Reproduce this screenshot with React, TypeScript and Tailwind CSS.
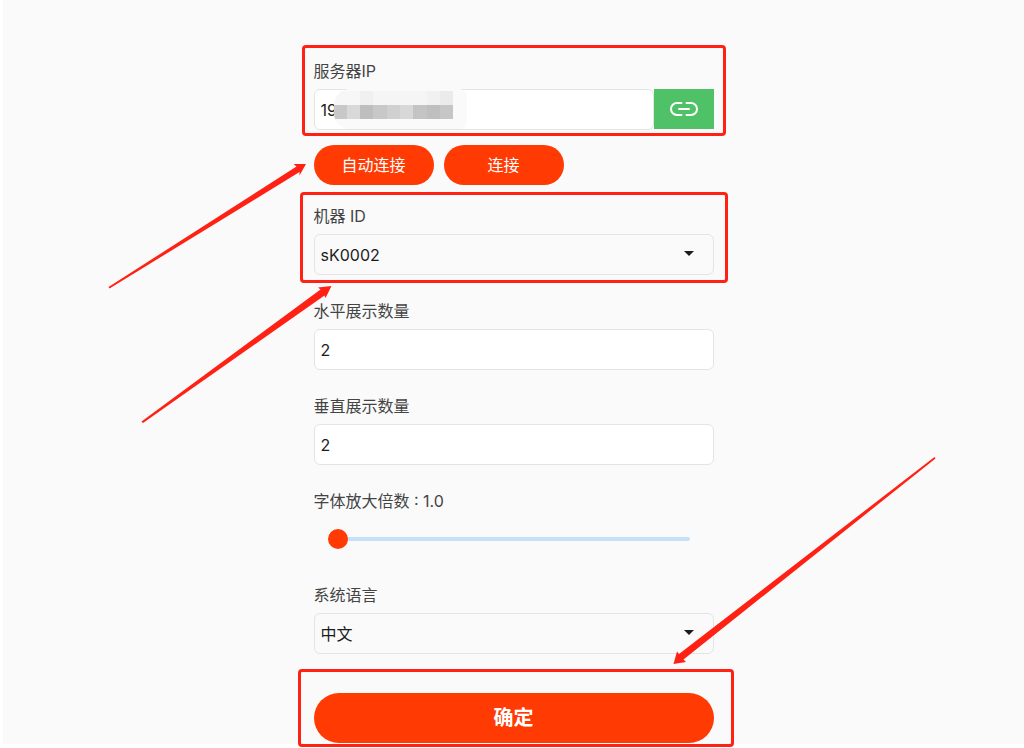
import type { ReactNode } from "react";

const BLURRED_CELLS = [
  ["#f7f7f7", "#f7f7f7", "#f0f0f0", "#f5f5f5", "#f5f5f5", "#f5f5f5", "#f5f5f5", "#f1f1f1", "#ebebeb"],
  ["#c8c8c8", "#d9d9d9", "#bebebe", "#c8c8c8", "#d0d0d0", "#d8d8d8", "#c4c4c4", "#bfbfbf", "#c6c6c6"],
];

const FIELD =
  "h-[41px] w-full rounded-md border border-[#e4e4e4] px-1.5 text-base text-[#1c1c1c] outline-none";

function Field({ id, label, children }: { id: string; label: string; children: ReactNode }) {
  return (
    <div className="relative flex flex-col gap-1.5">
      <label htmlFor={id} className="text-base leading-6 text-[#444444]">
        {label}
      </label>
      {children}
    </div>
  );
}

function Dropdown({ id, value }: { id: string; value: string }) {
  return (
    <div className="relative">
      <select id={id} defaultValue={value} className={`${FIELD} appearance-none bg-[#fafafa]`}>
        <option value={value}>{value}</option>
      </select>
      <svg
        viewBox="0 0 10 5"
        className="pointer-events-none absolute top-[17px] right-5 h-[5px] w-[10px]"
        aria-hidden="true"
      >
        <path d="M0 0H10L5 5Z" fill="#1c1c1c" />
      </svg>
    </div>
  );
}

function Mosaic() {
  return (
    <div className="absolute top-0 left-5 h-10 w-[133px] overflow-hidden rounded-l-2xl rounded-r-lg bg-[#fafafa]">
      <div className="mt-0.5 grid w-[120px] grid-cols-9">
        {BLURRED_CELLS.flat().map((color, i) => (
          <span key={i} className="h-[14px]" style={{ backgroundColor: color }} />
        ))}
      </div>
    </div>
  );
}

function Arrows() {
  return (
    <svg
      width="400"
      height="748"
      viewBox="314 0 400 748"
      className="pointer-events-none absolute top-0 left-0 overflow-visible"
      fill="#ff2114"
      aria-hidden="true"
    >
      <path d="M108.500 287L296.500 166.500L293.500 164L306 164L299.500 175.500L299.500 172L109.500 288.500Z" />
      <path d="M141.500 421.500L320.500 289.500L318 287.500L331.500 286L325.500 298L324.500 295.500L143 423Z" />
      <path d="M934.500 457L679 654L677 651.500L673.500 664L686 662L683.500 659.500L935.500 458.500Z" />
    </svg>
  );
}

export default function App() {
  return (
    <div className="min-h-screen bg-white pb-1 pl-[3px] font-['Inter','Noto_Sans_CJK_SC',sans-serif]">
      <main className="flex min-h-[calc(100vh-4px)] justify-center bg-[#fafafa]">
        <form className="relative w-full max-w-[400px] pt-[59px]" onSubmit={(e) => e.preventDefault()}>
          <div className="relative">
            <Field id="server" label="服务器IP">
              <div className="flex">
                <div className="relative flex-1">
                  <input id="server" type="text" defaultValue="19" className={`${FIELD} bg-white`} />
                  <Mosaic />
                </div>
                <button
                  type="button"
                  aria-label="连接"
                  className="flex h-10 w-[60px] items-center justify-center bg-[#4fc267]"
                >
                  <svg
                    viewBox="0 0 28 14"
                    className="h-[14px] w-7"
                    fill="none"
                    stroke="#fff"
                    strokeWidth="2"
                    strokeLinecap="round"
                  >
                    <path d="M11.5 1H7a6 6 0 0 0 0 12h4.500M16.500 1H21a6 6 0 0 1 0 12h-4.500M9 7H19" />
                  </svg>
                </button>
              </div>
            </Field>
            <div className="pointer-events-none absolute -inset-x-3 -top-3.5 -bottom-1.5 rounded border-3 border-[#ff2114]" />
          </div>

          <div className="flex gap-2.5 pt-[15px] pb-[19px]">
            <button type="button" className="h-10 w-[120px] rounded-full bg-[#ff3a03] text-base text-white">
              自动连接
            </button>
            <button type="button" className="h-10 w-[120px] rounded-full bg-[#ff3a03] text-base text-white">
              连接
            </button>
          </div>

          <div className="flex flex-col gap-6">
            <div className="relative">
              <Field id="machine" label="机器 ID">
                <Dropdown id="machine" value="sK0002" />
              </Field>
              <div className="pointer-events-none absolute -inset-x-3.5 -top-3 -bottom-2 rounded border-3 border-[#ff2114]" />
            </div>
            <Field id="columns" label="水平展示数量">
              <input id="columns" type="text" inputMode="numeric" defaultValue="2" className={`${FIELD} bg-white`} />
            </Field>
            <Field id="rows" label="垂直展示数量">
              <input id="rows" type="text" inputMode="numeric" defaultValue="2" className={`${FIELD} bg-white`} />
            </Field>
            <Field id="scale" label="字体放大倍数 : 1.0">
              <div className="flex h-10 items-center pr-6 pl-3.5">
                <input
                  id="scale"
                  type="range"
                  min="1"
                  max="3"
                  step="0.1"
                  defaultValue="1"
                  className="h-5 w-full appearance-none bg-transparent [&::-webkit-slider-runnable-track]:h-1 [&::-webkit-slider-runnable-track]:rounded-full [&::-webkit-slider-runnable-track]:bg-[#c5e1f7] [&::-webkit-slider-thumb]:-mt-2 [&::-webkit-slider-thumb]:size-5 [&::-webkit-slider-thumb]:appearance-none [&::-webkit-slider-thumb]:rounded-full [&::-webkit-slider-thumb]:bg-[#ff3a03]"
                />
              </div>
            </Field>
            <Field id="language" label="系统语言">
              <Dropdown id="language" value="中文" />
            </Field>
          </div>

          <div className="relative mt-[39px]">
            <button type="submit" className="h-[50px] w-full rounded-full bg-[#ff3a03] text-xl font-bold text-white">
              确定
            </button>
            <div className="pointer-events-none absolute -top-6 -right-5 -bottom-1 -left-4 rounded border-3 border-[#ff2114]" />
          </div>
          <Arrows />
        </form>
      </main>
    </div>
  );
}
